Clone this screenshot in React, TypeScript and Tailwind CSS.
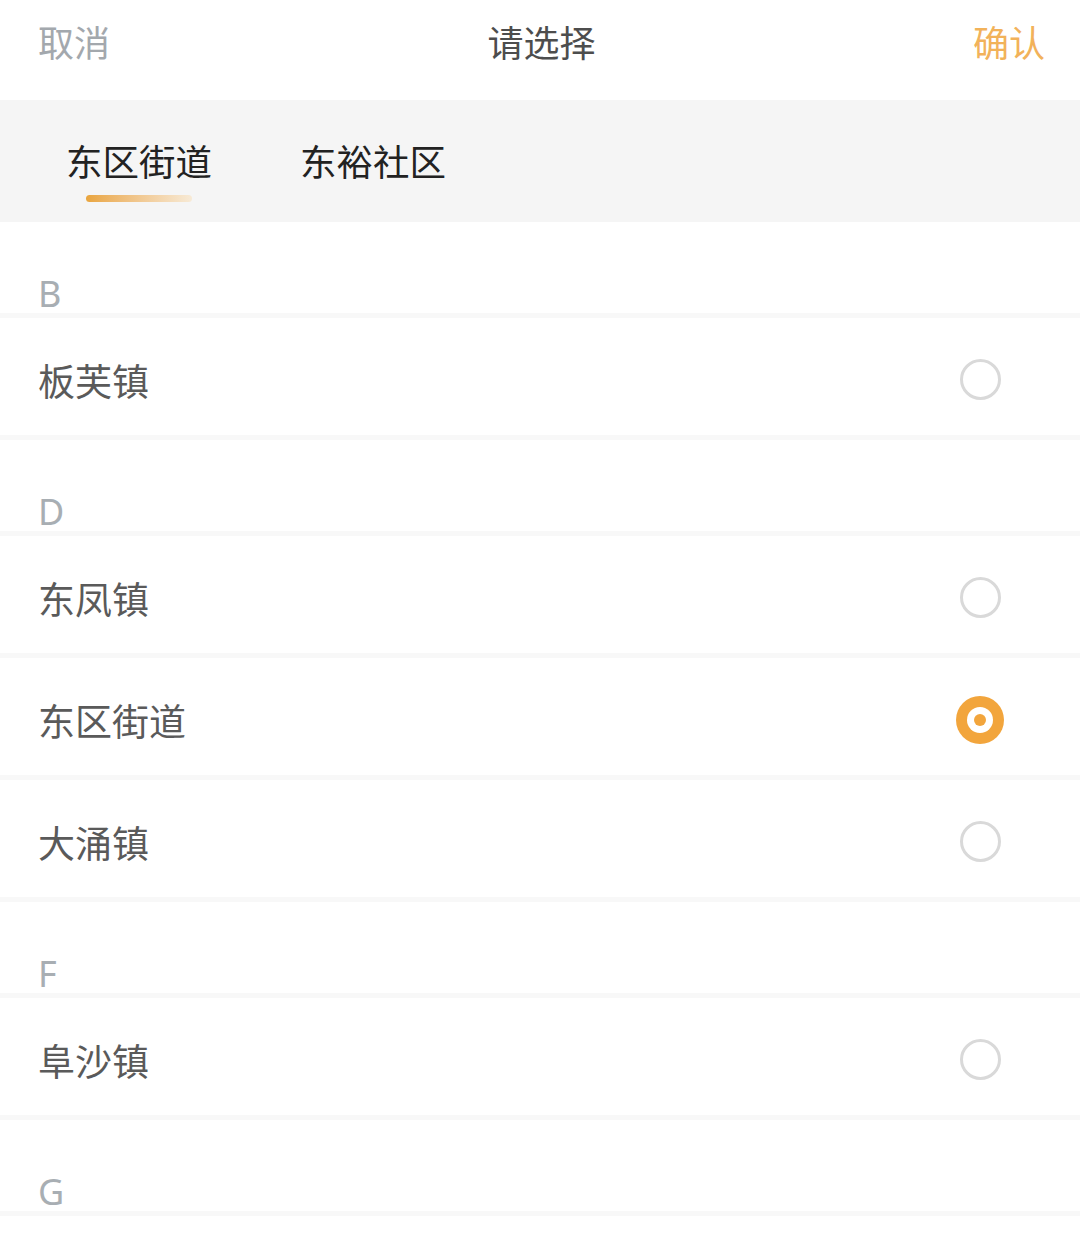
import React from 'react';

type Item = { name: string; selected?: boolean };
type Group = { letter: string; items: Item[] };

const groups: Group[] = [
  { letter: 'B', items: [{ name: '板芙镇' }] },
  { letter: 'D', items: [{ name: '东凤镇' }, { name: '东区街道', selected: true }, { name: '大涌镇' }] },
  { letter: 'F', items: [{ name: '阜沙镇' }] },
  { letter: 'G', items: [] },
];

const font = { fontFamily: '"Noto Sans CJK SC", "Noto Sans", sans-serif' };

const Radio: React.FC<{ checked?: boolean }> = ({ checked }) => (
  <div className="w-[48px] h-[48px] flex items-center justify-center">
    {checked ? (
      <div className="w-[48px] h-[48px] rounded-full bg-[#f2a53c] flex items-center justify-center">
        <div className="w-[26px] h-[26px] rounded-full bg-white flex items-center justify-center">
          <div className="w-[12px] h-[12px] rounded-full bg-[#f2a53c]" />
        </div>
      </div>
    ) : (
      <div className="w-[41px] h-[41px] rounded-full border-[3px] border-[#d9d9d9]" />
    )}
  </div>
);

export default function App() {
  return (
    <div className="w-[1080px] h-[1237px] overflow-hidden bg-white" style={font}>
      {/* Header */}
      <div className="h-[100px] flex items-center justify-between pl-[38px] pr-[35px] pb-[18px] text-[36px] leading-[40px]">
        <span className="text-[#a3a8ad]">取消</span>
        <span className="text-[#4d4d4d]">请选择</span>
        <span className="text-[#f2b25a]">确认</span>
      </div>

      {/* Tabs */}
      <div className="h-[122px] bg-[#f5f5f5] flex items-start pl-[66px] gap-[88px] pt-[39px]">
        <div className="flex flex-col items-center">
          <span className="text-[36.5px] leading-[44px] text-[#222]">东区街道</span>
          <div className="mt-[12px] w-[106px] h-[7px] rounded-full bg-gradient-to-r from-[#e9a53d] to-[#f7ead6]" />
        </div>
        <span className="text-[36.5px] leading-[44px] text-[#222]">东裕社区</span>
      </div>

      {/* List */}
      <div>
        {groups.map(g => (
          <div key={g.letter}>
            <div className="h-[96px] flex items-end pb-[1px] pl-[38px] border-b-[5px] border-[#f8f8f8]">
              <span className="text-[36px] leading-[36px] text-[#a8aeb3]" style={{ fontFamily: '"Noto Sans", sans-serif' }}>
                {g.letter}
              </span>
            </div>
            {g.items.map(it => (
              <div
                key={it.name}
                className="h-[122px] flex items-center justify-between pl-[38px] pr-[76px] pt-[6px] border-b-[5px] border-[#f8f8f8]"
              >
                <span className="text-[37px] leading-[40px] text-[#5a5a5a]">{it.name}</span>
                <Radio checked={it.selected} />
              </div>
            ))}
          </div>
        ))}
      </div>
    </div>
  );
}
